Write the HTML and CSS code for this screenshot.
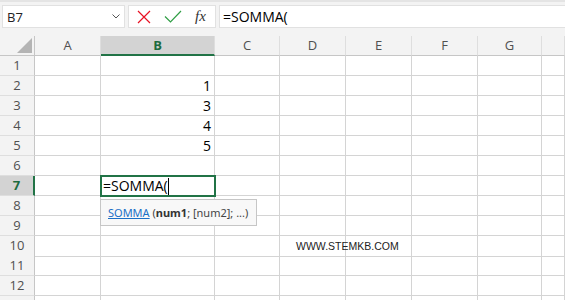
FILE: index.html
```html
<!DOCTYPE html>
<html lang="it">
<head>
    <meta charset="UTF-8">
    <title>Excel - SOMMA</title>
    <link rel="stylesheet" href="styles.css">
</head>
<body>
    <div class="toolbar">
        <div class="namebox">
            <span>B7</span>
            <svg class="chevron" width="8" height="5" viewBox="0 0 8 5"><polyline points="0.5,0.5 4,4 7.5,0.5" fill="none" stroke="#555" stroke-width="1"/></svg>
        </div>
        <div class="fx-box">
            <svg width="14" height="14" viewBox="0 0 14 14"><path d="M1 1 L13 13 M13 1 L1 13" stroke="#e81123" stroke-width="1.2" fill="none"/></svg>
            <svg width="18" height="13" viewBox="0 0 18 13"><polyline points="1,6.5 6.5,12 17,1" stroke="#2f9e44" stroke-width="1.2" fill="none"/></svg>
            <span class="fx">fx</span>
        </div>
        <div class="formula">=SOMMA(</div>
    </div>

    <div class="sheet">
        <div class="grid">
            <div class="corner"><span class="tri"></span></div>
            <div class="colhead">A</div>
            <div class="colhead selected">B</div>
            <div class="colhead">C</div>
            <div class="colhead">D</div>
            <div class="colhead">E</div>
            <div class="colhead">F</div>
            <div class="colhead">G</div>
            <div class="colhead"></div>
        </div>
        <div id="rows"></div>

        <div class="tooltip"><a>SOMMA</a> (<b>num1</b>; [num2]; ...)</div>
    </div>

    <script>
        const values = { 2: '1', 3: '3', 4: '4', 5: '5' };
        const rows = document.getElementById('rows');
        // la riga 13 resta sotto il bordo, solo la griglia
        for (let r = 1; r <= 13; r++) {
            const row = document.createElement('div');
            row.className = 'grid';
            const head = document.createElement('div');
            head.className = 'rowhead' + (r === 7 ? ' selected' : '');
            head.textContent = r < 13 ? r : '';
            row.appendChild(head);
            for (let c = 0; c < 8; c++) {
                const cell = document.createElement('div');
                cell.className = 'cell';
                if (c === 1 && values[r]) {
                    cell.classList.add('num');
                    cell.textContent = values[r];
                }
                if (c === 1 && r === 7) {
                    cell.classList.add('active');
                    cell.innerHTML = '=SOMMA(<span class="caret"></span>';
                }
                if (c === 3 && r === 10) {
                    cell.classList.add('mark');
                    cell.textContent = 'WWW.STEMKB.COM';
                }
                row.appendChild(cell);
            }
            rows.appendChild(row);
        }
    </script>
</body>
</html>
```

FILE: styles.css
```css
* {
    margin: 0;
    padding: 0;
    box-sizing: border-box;
}
body {
    font-family: "Open Sans", "Noto Sans", sans-serif;
    background-color: #fff;
    color: #000;
    width: 565px;
    height: 300px;
    overflow: hidden;
}
.toolbar {
    height: 36px;
    background-color: #f3f3f3;
    border-top: 2px solid #e4e4e4;
    display: flex;
    align-items: flex-start;
    padding: 3px 0 0 2px;
    gap: 3px;
}
.namebox {
    width: 123px;
    height: 23px;
    background: #fff;
    border: 1px solid #e1e1e1;
    display: flex;
    align-items: center;
    justify-content: space-between;
    padding: 0 4px 0 4px;
    font-size: 13px;
    color: #222;
}
.fx-box {
    width: 88px;
    height: 23px;
    background: #fff;
    border: 1px solid #e1e1e1;
    display: flex;
    align-items: center;
    padding: 0 0 0 8px;
    gap: 13px;
}
.fx {
    font-family: "Liberation Serif", serif;
    font-style: italic;
    font-size: 15px;
    color: #333;
}
.formula {
    flex: 1;
    height: 23px;
    background: #fff;
    border: 1px solid #e1e1e1;
    border-right: none;
    font-size: 14px;
    line-height: 21px;
    padding-left: 3px;
}
.sheet {
    position: relative;
}
.grid {
    display: grid;
    grid-template-columns: 35px 66px 114px 65px 66px 66px 66px 64px 1fr;
    height: 20px;
}
.corner, .colhead {
    background: #f3f3f3;
    border-right: 1px solid #dedede;
    border-bottom: 1px solid #c6c6c6;
    font-size: 13px;
    color: #505050;
    text-align: center;
    line-height: 19px;
}
.corner {
    position: relative;
    border-right: 1px solid #c6c6c6;
}
.tri {
    position: absolute;
    right: 2px;
    bottom: 2px;
    width: 0;
    height: 0;
    border-left: 15px solid transparent;
    border-bottom: 15px solid #b4b4b4;
}
.colhead.selected {
    background: #d3d3d3;
    color: #1d6b3f;
    font-weight: bold;
    border-bottom: 2px solid #217346;
    line-height: 18px;
}
.rowhead {
    background: #f3f3f3;
    border-right: 1px solid #c6c6c6;
    border-bottom: 1px solid #dedede;
    font-size: 13px;
    color: #505050;
    text-align: center;
    line-height: 19px;
}
.rowhead.selected {
    background: #d3d3d3;
    color: #1d6b3f;
    font-weight: bold;
    border-right: 2px solid #217346;
}
.cell {
    border-right: 1px solid #d4d4d4;
    border-bottom: 1px solid #d4d4d4;
    font-size: 14px;
    line-height: 19px;
    padding: 0 2px;
    white-space: nowrap;
}
.cell.num {
    text-align: right;
    padding-right: 3px;
}
.cell.active {
    outline: 2px solid #217346;
    outline-offset: -1px;
    position: relative;
    z-index: 1;
}
.caret {
    display: inline-block;
    width: 1px;
    height: 17px;
    background: #000;
    vertical-align: -4px;
}
.cell.mark {
    overflow: visible;
    font-family: "Liberation Sans", Arial, sans-serif;
    font-size: 10.5px;
    color: #222;
    padding-left: 16px;
    line-height: 20px;
}
.tooltip {
    position: absolute;
    left: 100px;
    top: 163px;
    width: 157px;
    height: 27px;
    background: #f8f8f8;
    border: 1px solid #c6c6c6;
    font-family: "Noto Sans", sans-serif;
    font-size: 11px;
    line-height: 25px;
    padding-left: 7px;
    color: #444;
    z-index: 2;
}
.tooltip a {
    color: #1a6fc6;
    text-decoration: underline;
}
.tooltip b {
    color: #333;
}
```
